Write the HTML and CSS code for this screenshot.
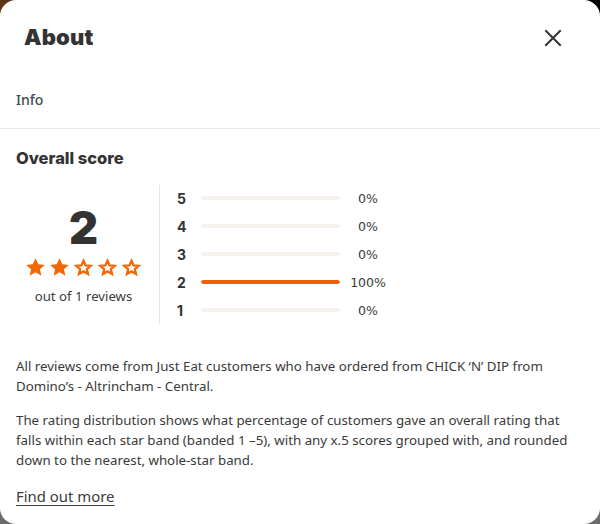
FILE: index.html
```html
<!DOCTYPE html>
<html lang="en">
<head>
<meta charset="utf-8">
<title>About</title>
<link rel="stylesheet" href="styles.css">
</head>
<body>
<div class="modal">
  <header class="modal-header">
    <h1 class="title">About</h1>
    <button class="close" aria-label="Close">
      <svg viewBox="0 0 18 18" width="18" height="18"><path d="M2 2 L16 16 M16 2 L2 16" stroke="#2f3437" stroke-width="2" stroke-linecap="square" fill="none"/></svg>
    </button>
  </header>
  <nav class="tabs"><span class="tab">Info</span></nav>
  <section class="content">
    <h2 class="section-title">Overall score</h2>
    <div class="score">
      <div class="score-summary">
        <div class="score-value">2</div>
        <div class="stars">
          <svg class="star" viewBox="0 0 20 20"><path class="full" d="M10 1.2 L12.7 7 L18.9 7.5 L14.2 11.6 L15.6 17.8 L10 14.5 L4.4 17.8 L5.8 11.6 L1.1 7.5 L7.3 7 Z"/></svg>
          <svg class="star" viewBox="0 0 20 20"><path class="full" d="M10 1.2 L12.7 7 L18.9 7.5 L14.2 11.6 L15.6 17.8 L10 14.5 L4.4 17.8 L5.8 11.6 L1.1 7.5 L7.3 7 Z"/></svg>
          <svg class="star" viewBox="0 0 20 20"><path class="empty" d="M10 3.6 L12 8 L16.8 8.4 L13.2 11.5 L14.3 16.2 L10 13.7 L5.7 16.2 L6.8 11.5 L3.2 8.4 L8 8 Z"/></svg>
          <svg class="star" viewBox="0 0 20 20"><path class="empty" d="M10 3.6 L12 8 L16.8 8.4 L13.2 11.5 L14.3 16.2 L10 13.7 L5.7 16.2 L6.8 11.5 L3.2 8.4 L8 8 Z"/></svg>
          <svg class="star" viewBox="0 0 20 20"><path class="empty" d="M10 3.6 L12 8 L16.8 8.4 L13.2 11.5 L14.3 16.2 L10 13.7 L5.7 16.2 L6.8 11.5 L3.2 8.4 L8 8 Z"/></svg>
        </div>
        <div class="score-count">out of 1 reviews</div>
      </div>
      <ul class="bars">
        <li class="bar-row"><span class="bar-label">5</span><span class="bar-track"><span class="bar-fill" style="width:0%"></span></span><span class="bar-pct">0%</span></li>
        <li class="bar-row"><span class="bar-label">4</span><span class="bar-track"><span class="bar-fill" style="width:0%"></span></span><span class="bar-pct">0%</span></li>
        <li class="bar-row"><span class="bar-label">3</span><span class="bar-track"><span class="bar-fill" style="width:0%"></span></span><span class="bar-pct">0%</span></li>
        <li class="bar-row"><span class="bar-label">2</span><span class="bar-track"><span class="bar-fill" style="width:100%"></span></span><span class="bar-pct">100%</span></li>
        <li class="bar-row"><span class="bar-label">1</span><span class="bar-track"><span class="bar-fill" style="width:0%"></span></span><span class="bar-pct">0%</span></li>
      </ul>
    </div>
    <p class="text">All reviews come from Just Eat customers who have ordered from CHICK ‘N’ DIP from Domino’s - Altrincham - Central.</p>
    <p class="text">The rating distribution shows what percentage of customers gave an overall rating that falls within each star band (banded 1 –5), with any x.5 scores grouped with, and rounded down to the nearest, whole-star band.</p>
    <a class="link" href="#">Find out more</a>
  </section>
</div>
</body>
</html>
```
FILE: styles.css
```css
* { box-sizing: border-box; }
html, body { margin: 0; height: 100%; }
body {
  background: linear-gradient(90deg, #5b3514 0%, #2a1a0c 50%, #000 100%) top / 100% 50% no-repeat,
              #6b6b6b;
  font-family: "Noto Sans", "Open Sans", sans-serif;
  color: #242e30;
}
.modal {
  width: 600px;
  height: 524px;
  background: #fff;
  border-radius: 16px;
  overflow: hidden;
}
.modal-header {
  display: flex;
  justify-content: space-between;
  align-items: flex-start;
  padding: 20px 38px 0 24px;
  height: 74px;
}
.title {
  margin: 0;
  padding-top: 2px;
  font-family: "Inter", sans-serif;
  font-weight: 900;
  font-size: 22px;
  line-height: 30px;
  color: #333;
  letter-spacing: 0.2px;
}
.close {
  border: 0;
  background: none;
  padding: 0;
  margin-top: 9px;
  width: 18px;
  height: 18px;
  cursor: pointer;
}
.close svg { display: block; }
.tabs {
  padding: 0 16px;
  height: 55px;
  border-bottom: 1px solid #e6e6e6;
  display: flex;
  align-items: flex-start;
}
.tab {
  font-size: 14px;
  line-height: 20px;
  font-weight: 500;
  color: #3b4a54;
  padding-top: 16px;
}
.content { padding: 0 16px; }
.section-title {
  margin: 18px 0 0;
  font-family: "Inter", sans-serif;
  font-weight: 800;
  font-size: 16.5px;
  line-height: 22px;
  color: #333;
}
.score {
  display: flex;
  margin-top: 16px;
}
.score-summary {
  width: 144px;
  border-right: 1px solid #e6e6e6;
  display: flex;
  flex-direction: column;
  align-items: center;
  padding-top: 18px;
  height: 139px;
}
.score-value {
  font-family: "Inter", sans-serif;
  font-weight: 900;
  font-size: 45px;
  line-height: 50px;
  color: #333;
  margin-left: -8px;
}
.stars {
  display: flex;
  gap: 3px;
  margin-top: 4px;
  margin-left: -8px;
}
.star { width: 21px; height: 21px; display: block; }
.star .full { fill: #f36805; }
.star .empty { fill: none; stroke: #f36805; stroke-width: 2.2; stroke-linejoin: miter; }
.score-count {
  font-size: 13.2px;
  line-height: 18px;
  color: #3a3a3a;
  margin-top: 9px;
  margin-left: -8px;
}
.bars {
  list-style: none;
  margin: 0;
  padding: 3px 0 0 17px;
  display: flex;
  flex-direction: column;
  gap: 8px;
}
.bar-row {
  display: flex;
  align-items: center;
  height: 20px;
}
.bar-label {
  width: 24px;
  font-family: "Inter", sans-serif;
  font-weight: 700;
  font-size: 14px;
  color: #333;
}
.bar-track {
  width: 139px;
  height: 4px;
  border-radius: 2px;
  background: #f5f2ee;
  overflow: hidden;
}
.bar-fill {
  display: block;
  height: 100%;
  background: #f06000;
  border-radius: 2px;
}
.bar-pct {
  width: 56px;
  text-align: center;
  font-family: "DejaVu Sans", sans-serif;
  font-size: 12.5px;
  color: #3a3a3a;
}
.text {
  margin: 32px 0 0;
  font-size: 13.3px;
  line-height: 20px;
  color: #3a3a3a;
}
.text + .text { margin-top: 14px; }
.link {
  display: inline-block;
  margin-top: 16px;
  font-size: 14.9px;
  line-height: 20px;
  color: #3a3a3a;
  text-decoration: underline;
  text-underline-offset: 3px;
}
```
